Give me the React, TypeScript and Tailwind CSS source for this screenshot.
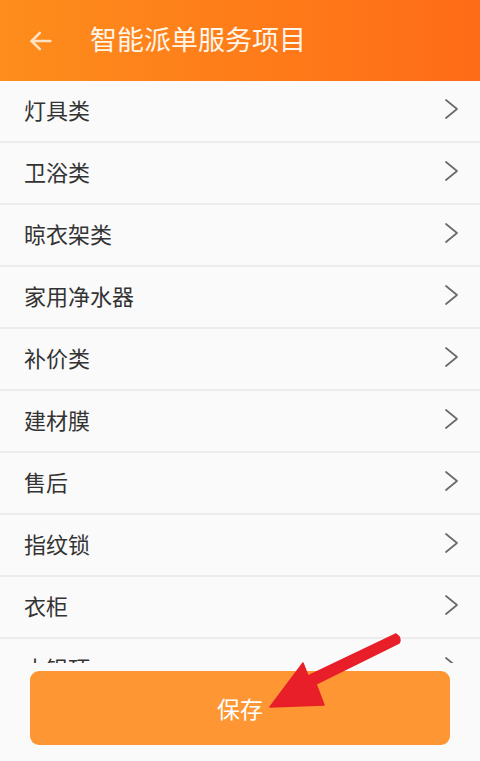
const items = ["灯具类", "卫浴类", "晾衣架类", "家用净水器", "补价类", "建材膜", "售后", "指纹锁", "衣柜", "木铝顶"];

function Chevron() {
  return (
    <svg width="16" height="22" viewBox="0 0 16 22" fill="none" stroke="#6a6a6a" strokeWidth="1.7" strokeLinecap="round" strokeLinejoin="round">
      <path d="M2 2l11 9-11 9" />
    </svg>
  );
}

function Row({ label }: { label: string }) {
  return (
    <div className="h-[62px] flex items-center justify-between pl-6 pr-[20px] pb-[4px] border-b-2 border-[#ececec] bg-[#fafafa]">
      <span className="text-[22px] text-[#333333]">{label}</span>
      <Chevron />
    </div>
  );
}

export default function App() {
  return (
    <div
      className="relative h-[761px] w-[480px] overflow-hidden bg-[#fafafa]"
      style={{ fontFamily: '"Noto Sans CJK SC", "Noto Sans", sans-serif' }}
    >
      {/* Header */}
      <div className="h-[81px] flex items-center bg-gradient-to-r from-[#fd8d1c] to-[#ff6b17]">
        <div className="w-[90px] flex justify-center pr-[8px]">
          <svg width="28" height="28" viewBox="0 0 24 24" fill="none" stroke="#ffe3c4" strokeWidth="2.2" strokeLinecap="round" strokeLinejoin="round">
            <path d="M20 12H4" />
            <path d="M11 5l-7 7 7 7" />
          </svg>
        </div>
        <h1 className="text-[27px] text-[#fff6ea] font-normal pb-[2px]">智能派单服务项目</h1>
      </div>

      {/* List */}
      <div>
        {items.map((it) => (
          <Row key={it} label={it} />
        ))}
      </div>

      {/* Bottom save bar */}
      <div className="absolute left-0 right-0 top-[663px] bottom-0 bg-[#fafafa] px-[30px] pt-[8px]">
        <button className="w-full h-[74px] rounded-[9px] bg-[#fd9633] text-white text-[23px]">保存</button>
      </div>

      {/* Red annotation arrow */}
      <svg className="absolute left-0 top-0 pointer-events-none" width="480" height="761" viewBox="0 0 480 761">
        <path
          d="M396 634 Q402 638 399 643 L316 684 L324 705 L270 707 L303 663 L308 676 Z"
          fill="#e81e28"
          stroke="#e81e28"
          strokeWidth="1.5"
          strokeLinejoin="round"
        />
      </svg>
    </div>
  );
}
